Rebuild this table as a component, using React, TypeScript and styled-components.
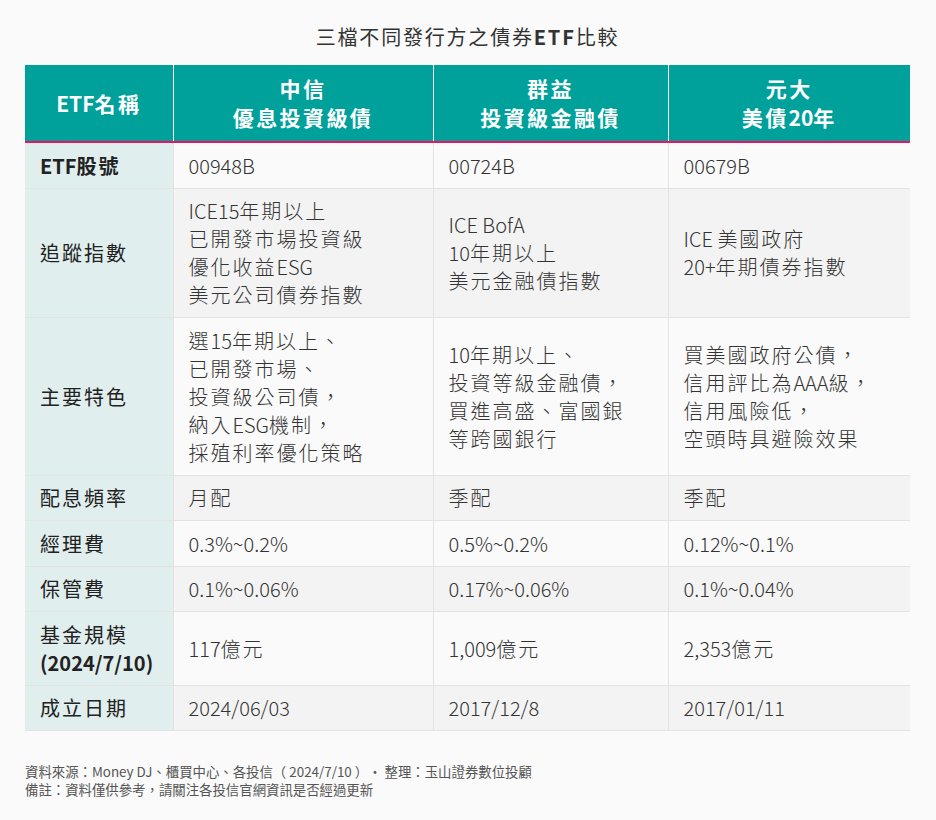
import styled, { createGlobalStyle } from 'styled-components';

const GlobalStyle = createGlobalStyle`
  body {
    margin: 0;
    background: #fafafa;
    font-family: 'Noto Sans CJK TC', 'Noto Sans', sans-serif;
    color: #333;
  }
`;

const Page = styled.div`
  width: 936px;
  padding: 22px 26px 0 25px;
  box-sizing: border-box;
`;

const Title = styled.h1`
  margin: 0 0 13px;
  text-align: center;
  font-size: 20px;
  line-height: 30px;
  font-weight: 400;
  letter-spacing: 1.8px;
  color: #333;
`;

const Bold = styled.b`
  font-weight: 700;
`;

// Latin runs are set tight; only CJK glyphs get the extra tracking
const Latin = styled.span`
  letter-spacing: 0;
`;

const track = (text: string) =>
  text.split(/([\u0000-\u2fff]+)/).map((part, i) =>
    /^[\u0000-\u2fff]+$/.test(part) ? <Latin key={i}>{part}</Latin> : part
  );

const Table = styled.table`
  width: 885px;
  border-collapse: collapse;
  table-layout: fixed;
`;

const HeadCell = styled.th`
  background: #00a19b;
  color: #fff;
  font-size: 21px;
  line-height: 29px;
  font-weight: 700;
  letter-spacing: 2.4px;
  text-align: center;
  vertical-align: middle;
  height: 76px;
  padding: 0 10px;
  border-left: 1px solid #fff;
  border-bottom: 2px solid #ee1266;

  &:first-child {
    border-left: none;
  }
`;

const Row = styled.tr<{ $shade: boolean }>`
  background: ${(p) => (p.$shade ? '#f3f3f3' : '#fafafa')};
`;

const LabelCell = styled.th`
  background: #e1eeee;
  text-align: left;
  font-weight: 400;
  color: #222;
`;

const Cell = styled.td`
  font-weight: 300;
`;

const Body = styled.tbody`
  th,
  td {
    font-size: 20px;
    line-height: 28px;
    letter-spacing: 2px;
    padding: 8.5px 15px 8px;
    vertical-align: middle;
    border-bottom: 1px solid #e3e3e3;
    border-left: 1px solid #e3e3e3;
    white-space: pre-line;
  }

  th {
    border-left: none;
  }
`;

const Notes = styled.div`
  margin-top: 31px;
  font-size: 13.4px;
  line-height: 18px;
  color: #555;
`;

type RowData = { label: React.ReactNode; cells: string[] };

const rows: RowData[] = [
  { label: <Bold>{track('ETF股號')}</Bold>, cells: ['00948B', '00724B', '00679B'] },
  {
    label: '追蹤指數',
    cells: [
      'ICE15年期以上\n已開發市場投資級\n優化收益ESG\n美元公司債券指數',
      'ICE BofA\n10年期以上\n美元金融債指數',
      'ICE 美國政府\n20+年期債券指數',
    ],
  },
  {
    label: '主要特色',
    cells: [
      '選15年期以上、\n已開發市場、\n投資級公司債，\n納入ESG機制，\n採殖利率優化策略',
      '10年期以上、\n投資等級金融債，\n買進高盛、富國銀\n等跨國銀行',
      '買美國政府公債，\n信用評比為AAA級，\n信用風險低，\n空頭時具避險效果',
    ],
  },
  { label: '配息頻率', cells: ['月配', '季配', '季配'] },
  { label: '經理費', cells: ['0.3%~0.2%', '0.5%~0.2%', '0.12%~0.1%'] },
  { label: '保管費', cells: ['0.1%~0.06%', '0.17%~0.06%', '0.1%~0.04%'] },
  {
    label: (
      <>
        基金規模{'\n'}
        <Bold>
          <Latin>(2024/7/10)</Latin>
        </Bold>
      </>
    ),
    cells: ['117億元', '1,009億元', '2,353億元'],
  },
  { label: '成立日期', cells: ['2024/06/03', '2017/12/8', '2017/01/11'] },
];

const heads = ['ETF名稱', '中信\n優息投資級債', '群益\n投資級金融債', '元大\n美債20年'];

export default function App() {
  return (
    <Page>
      <GlobalStyle />
      <Title>
        三檔不同發行方之債券<Bold>ETF</Bold>比較
      </Title>
      <Table>
        <colgroup>
          <col style={{ width: 148 }} />
          <col style={{ width: 260 }} />
          <col style={{ width: 235 }} />
          <col style={{ width: 242 }} />
        </colgroup>
        <thead>
          <tr>
            {heads.map((h) => (
              <HeadCell key={h}>
                {h.split('\n').map((line, i) => (
                  <div key={i}>{track(line)}</div>
                ))}
              </HeadCell>
            ))}
          </tr>
        </thead>
        <Body>
          {rows.map((r, i) => (
            <Row key={i} $shade={i % 2 === 1}>
              <LabelCell>{r.label}</LabelCell>
              {r.cells.map((c, j) => (
                <Cell key={j}>{track(c)}</Cell>
              ))}
            </Row>
          ))}
        </Body>
      </Table>
      <Notes>
        資料來源：Money DJ、櫃買中心、各投信（ 2024/7/10 ）• 整理：玉山證券數位投顧
        <br />
        備註：資料僅供參考，請關注各投信官網資訊是否經過更新
      </Notes>
    </Page>
  );
}
